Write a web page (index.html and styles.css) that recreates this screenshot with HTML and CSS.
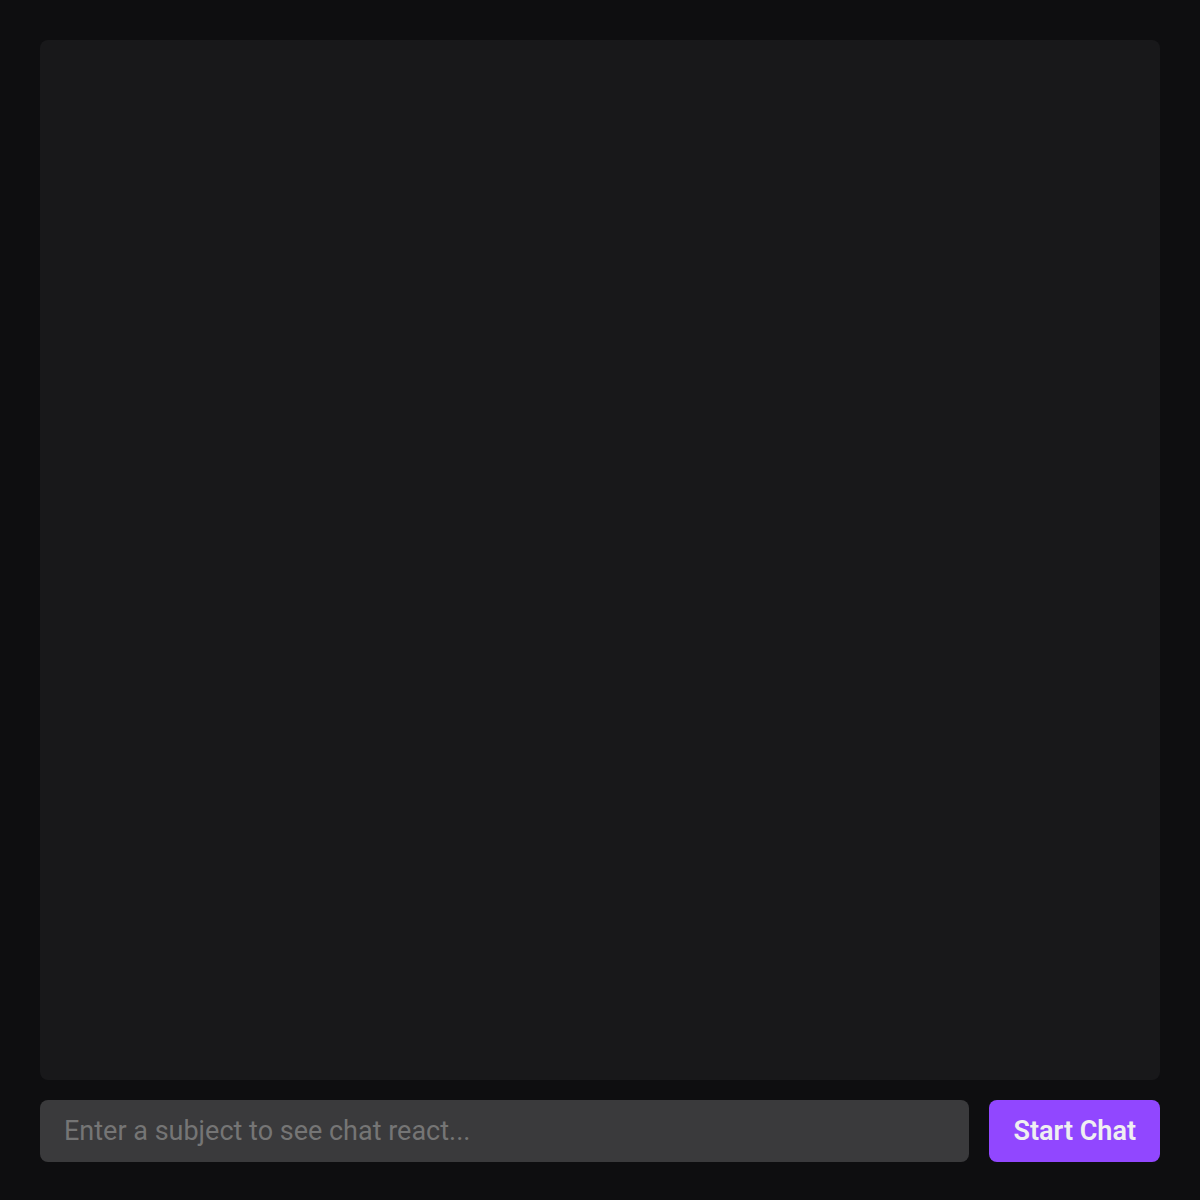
FILE: index.html
```html
<!DOCTYPE html>
<html lang="en" dir="ltr">
    <head>
        <meta charset="utf-8">
        <meta name="viewport" content="width=device-width, initial-scale=1">
        <title>Chat</title>
        <link rel="stylesheet" href="styles.css">
    </head>

    <body>
        <main class="chat">
            <div class="chat-messages" role="log" aria-label="Chat messages"></div>
            <form class="chat-form">
                <input class="chat-input" type="text" name="subject" aria-label="Subject" placeholder="Enter a subject to see chat react...">
                <button class="chat-button" type="button">Start Chat</button>
            </form>
        </main>
    </body>

</html>
```

FILE: styles.css
```css
* {
    box-sizing: border-box;
}
body {
    margin: 0;
    background: #0e0e10;
    color: #efeff1;
    font-family: Roboto, 'Helvetica Neue', Arial, sans-serif;
}
.chat {
    display: flex;
    flex-direction: column;
    gap: 20px;
    height: 100vh;
    padding: 40px 40px 38px;
}
.chat-messages {
    flex: 1;
    overflow-y: auto;
    background: #18181a;
    border-radius: 8px;
}
.chat-form {
    display: flex;
    gap: 20px;
}
.chat-input,
.chat-button {
    padding: 15px 24px;
    border: 0;
    border-radius: 8px;
    font-family: inherit;
    font-size: 27px;
    line-height: 32px;
}
.chat-input {
    flex: 1;
    min-width: 0;
    background: #3a3a3c;
    color: #efeff1;
}
.chat-input::placeholder {
    color: #757575;
}
.chat-button {
    background: #9147ff;
    color: #efeff1;
    font-weight: 600;
    cursor: pointer;
}
```
